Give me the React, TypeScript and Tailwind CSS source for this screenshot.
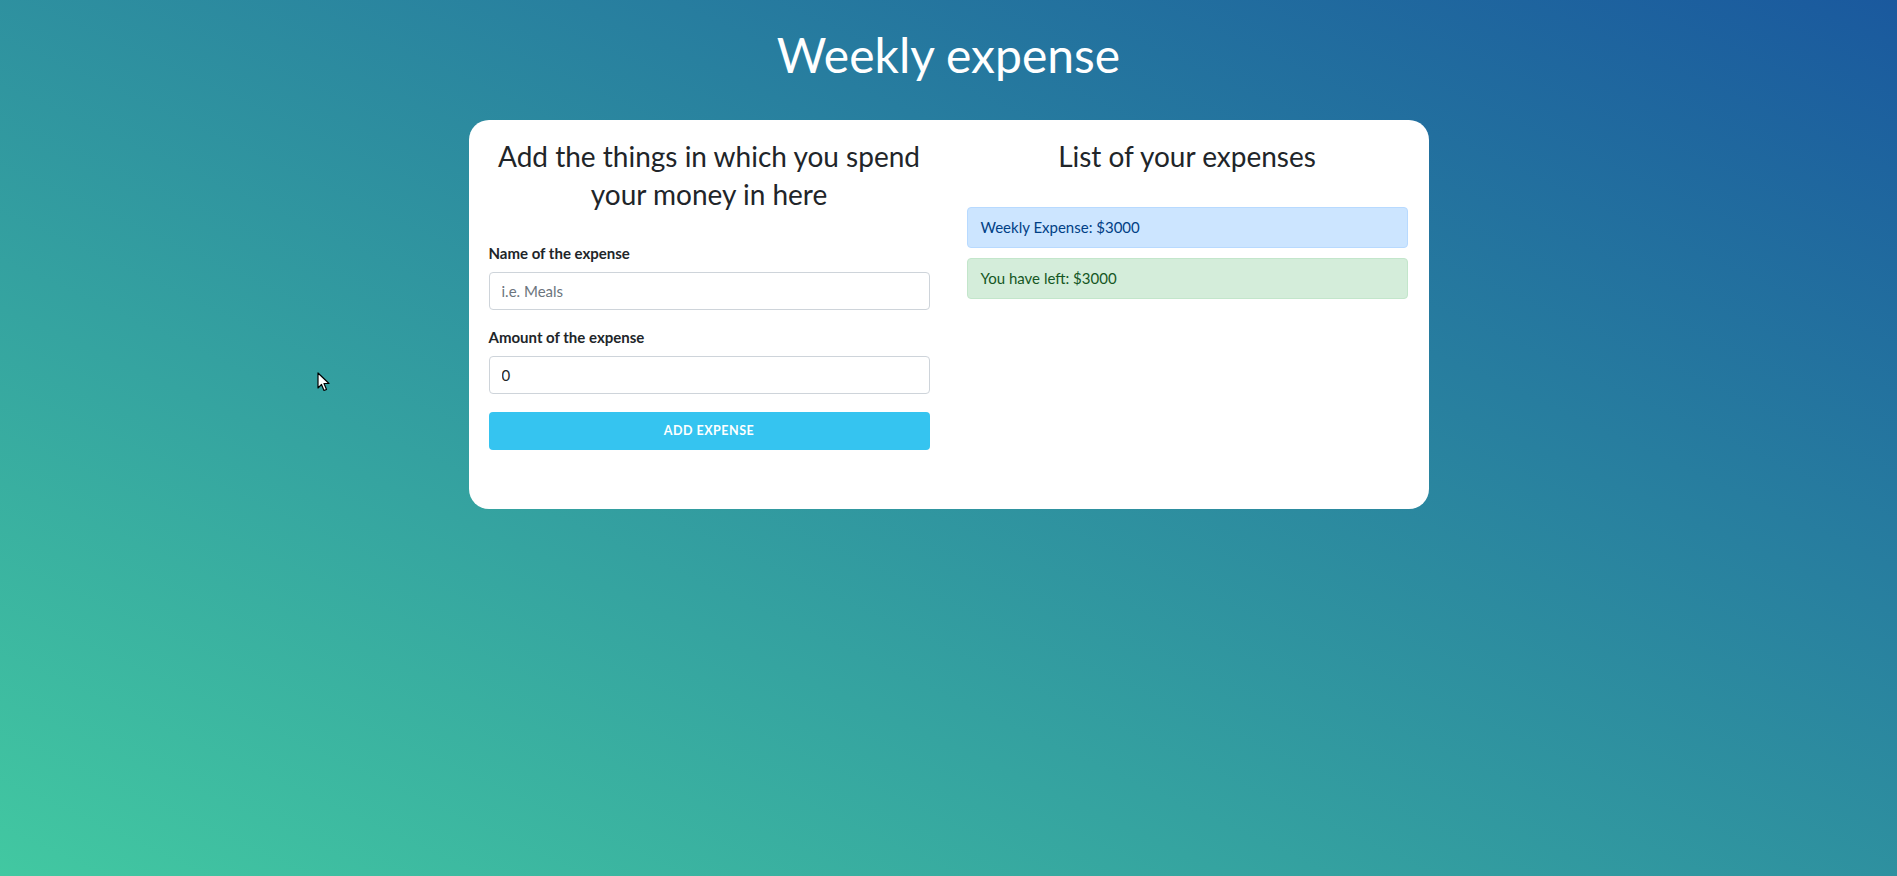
import React, { useState } from 'react';

const FONT = "font-['Lato','Open_Sans',sans-serif]";

const Cursor = () => (
  <svg
    className="absolute left-[317px] top-[372px] pointer-events-none"
    width="13"
    height="21"
    viewBox="0 0 13 21"
  >
    <path
      d="M1 1 L1 16 L4.5 12.5 L7 18.5 L9.5 17.5 L7 11.5 L12 11.5 Z"
      fill="#fff"
      stroke="#000"
      strokeWidth="1.2"
      strokeLinejoin="round"
    />
  </svg>
);

export default function App() {
  const [name, setName] = useState('');
  const [amount, setAmount] = useState('0');
  const budget = 3000;

  return (
    <div
      className={`relative min-h-screen w-full bg-[linear-gradient(to_top_right,#42c8a1,#1a599e)] ${FONT}`}
    >
      <h1 className="pt-[27px] text-center text-[48px] leading-[56px] text-white font-normal">
        Weekly expense
      </h1>

      <div className="mx-auto mt-[37px] w-[960px] h-[389px] rounded-[20px] bg-white px-5 pt-[17px] flex gap-[37px]">
        {/* form column */}
        <div className="w-[441px]">
          <h2 className="text-center text-[28px] leading-[38px] text-[#212529] font-normal">
            Add the things in which you spend your money in here
          </h2>

          <div className="mt-[30px]">
            <label className="block text-[15px] leading-[21px] font-bold text-[#212529] mb-2">
              Name of the expense
            </label>
            <input
              type="text"
              value={name}
              onChange={(e) => setName(e.target.value)}
              placeholder="i.e. Meals"
              className="w-full h-[38px] px-3 rounded border border-[#ced4da] text-[15px] text-[#495057] placeholder:text-[#6c757d] outline-none"
            />
          </div>

          <div className="mt-[17px]">
            <label className="block text-[15px] leading-[21px] font-bold text-[#212529] mb-2">
              Amount of the expense
            </label>
            <input
              type="number"
              value={amount}
              onChange={(e) => setAmount(e.target.value)}
              className="w-full h-[38px] px-3 rounded border border-[#ced4da] text-[15px] text-[#212529] outline-none"
            />
          </div>

          <button className="mt-[18px] w-full h-[38px] rounded bg-[#35c4f0] text-white text-[12.5px] font-bold uppercase tracking-[0.04em]">
            Add expense
          </button>
        </div>

        {/* list column */}
        <div className="w-[441px]">
          <h2 className="text-center text-[28px] leading-[38px] text-[#212529] font-normal">
            List of your expenses
          </h2>

          <div className="mt-[32px] flex flex-col gap-[10px]">
            <div className="h-[41px] flex items-center px-[13px] rounded border border-[#b8daff] bg-[#cce5ff] text-[#004085] text-[15px]">
              Weekly Expense: ${budget}
            </div>
            <div className="h-[41px] flex items-center px-[13px] rounded border border-[#c3e6cb] bg-[#d4edda] text-[#155724] text-[15px]">
              You have left: ${budget - Number(amount || 0)}
            </div>
          </div>
        </div>
      </div>

      <Cursor />
    </div>
  );
}
